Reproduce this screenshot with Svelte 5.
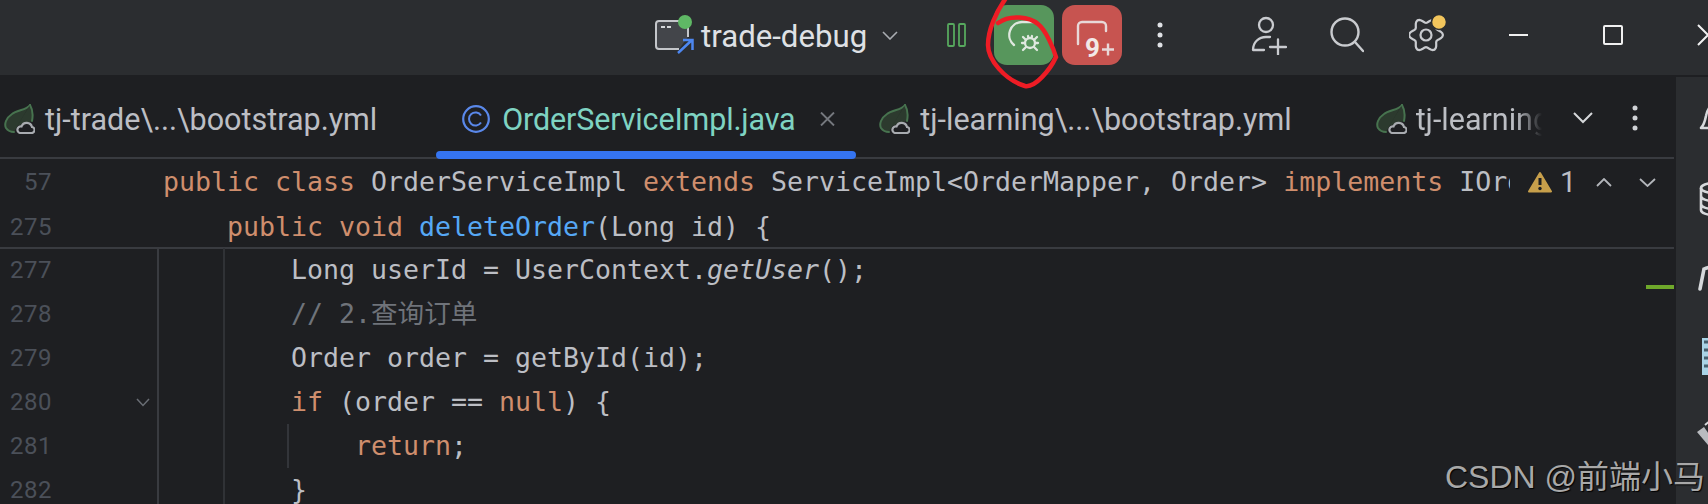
<script>
  const lines = [
    { n: '277', html: [['t','Long userId = UserContext.'],['i','getUser'],['t','();']] },
    { n: '278', html: [['c','// 2.查询订单']] },
    { n: '279', html: [['t','Order order = getById(id);']] },
    { n: '280', fold: true, html: [['k','if'],['t',' (order == '],['k','null'],['t',') {']] },
    { n: '281', guide: true, html: [['k','    return'],['t',';']] },
    { n: '282', html: [['t','}']] }
  ];

  // wavy six-lobed gear outline
  let gear = '';
  for (let a = 0; a <= 360; a += 6) {
    const t = (a - 30) * Math.PI / 180;
    const r = 14.5 + 2.4 * Math.cos(6 * t);
    gear += `${a ? 'L' : 'M'}${(17 + r * Math.cos(t)).toFixed(2)} ${(20 + r * Math.sin(t)).toFixed(2)}`;
  }
  gear += 'Z';
</script>

{#snippet leaf()}
  <svg class="leaf" width="32" height="30" viewBox="0 0 32 30" fill="none">
    <path d="M27 1C24 6 14 6 9 10 3 14 1 20 3 24c2 3 5 4 8 4" fill="#2c3a2e" stroke="#47734f" stroke-width="2" stroke-linecap="round"/>
    <path d="M27 1c3 5 3 11 2 16L14 22z" fill="#2c3a2e"/>
    <path d="M27 1c3 5 3 11 2 16" stroke="#47734f" stroke-width="2" stroke-linecap="round"/>
    <path d="M17 29h11a3 3 0 0 0 1-6 5.500 5.500 0 0 0-10.500-.5A3.300 3.300 0 0 0 17 29z" fill="#1e1f22" stroke="#a8abb0" stroke-width="2.200"/>
  </svg>
{/snippet}

<div class="page">
  <header class="titlebar">
    <div class="run-config">
      <svg width="40" height="40" viewBox="0 0 40 40" fill="none">
        <path d="M34 22V9a3 3 0 0 0-3-3H5a3 3 0 0 0-3 3v22a3 3 0 0 0 3 3h20" fill="#43454a" stroke="#c4c6ca" stroke-width="2"/>
        <path d="M7 12h4M13 12h4" stroke="#d5d7da" stroke-width="2"/>
        <circle cx="31" cy="7" r="7" fill="#5fb865"/>
        <path d="M24 38l14-13M29 25h9.500v10" stroke="#4d87f0" stroke-width="2.500"/>
      </svg>
      <span class="config-name">trade-debug</span>
      <svg class="config-chev" width="16" height="9" viewBox="0 0 16 9" fill="none"><path d="M1 1l7 7 7-7" stroke="#a9acb1" stroke-width="1.600"/></svg>
    </div>
    <svg class="pause" width="19" height="24" viewBox="0 0 19 24" fill="none">
      <rect x="1" y="1" width="6" height="22" rx="1" stroke="#57a85e" stroke-width="1.800"/>
      <rect x="12" y="1" width="6" height="22" rx="1" stroke="#57a85e" stroke-width="1.800"/>
    </svg>
    <div class="action debug">
      <svg width="60" height="60" viewBox="0 0 60 60" fill="none" stroke="#dfe8df" stroke-width="2.300" stroke-linecap="round">
        <path d="M20 40A13 13 0 0 1 28 17H40"/>
        <circle cx="36" cy="38" r="5" fill="#57965c"/>
        <path d="M29 32l3 3M43 32l-3 3M28 38h3M41 38h3M29 45l3-3M43 45l-3-3M34 31l.5 2M38 31l-.5 2"/>
      </svg>
    </div>
    <div class="action stop">
      <svg width="60" height="60" viewBox="0 0 60 60" fill="none">
        <path d="M16 39V21a4 4 0 0 1 4-4h20a4 4 0 0 1 4 4v5" stroke="#e8d8d8" stroke-width="2.400" stroke-linecap="round"/>
        <text x="23" y="52" class="nine">9</text>
        <path d="M40 44.500h12M46 38.500v12" stroke="#e8d8d8" stroke-width="2.400"/>
      </svg>
    </div>
    <svg class="kebab" width="6" height="26" viewBox="0 0 6 26"><circle cx="3" cy="3" r="2.500" fill="#dfe1e5"/><circle cx="3" cy="13" r="2.500" fill="#dfe1e5"/><circle cx="3" cy="23" r="2.500" fill="#dfe1e5"/></svg>
    <svg class="user" width="36" height="40" viewBox="0 0 36 40" fill="none" stroke="#c9cbcf" stroke-width="2.300" stroke-linecap="round">
      <circle cx="15" cy="10" r="7"/>
      <path d="M2 35c0-8 6-13 13-13h4M2 35h11M19 32h16M27 24.500v15"/>
    </svg>
    <svg class="search" width="34" height="36" viewBox="0 0 34 36" fill="none" stroke="#c9cbcf" stroke-width="2.400" stroke-linecap="round">
      <circle cx="15" cy="15" r="13.500"/><path d="M25 25l8 9"/>
    </svg>
    <svg class="gear" width="38" height="40" viewBox="0 0 38 40" fill="none">
      <path d={gear} stroke="#c9cbcf" stroke-width="2.200"/>
      <circle cx="17" cy="20" r="5.500" stroke="#c9cbcf" stroke-width="2.200"/>
      <circle cx="30" cy="7" r="7.500" fill="#f2c55c" stroke="#2b2d30" stroke-width="1.500"/>
    </svg>
    <span class="w-min"></span>
    <span class="w-max"></span>
    <svg class="w-close" width="14" height="22" viewBox="0 0 14 22" fill="none"><path d="M1 1l10 10L1 21" stroke="#f0f0f0" stroke-width="2"/></svg>
  </header>

  <div class="body">
    <main class="editor">
      <nav class="tabs">
        <div class="tab t1">{@render leaf()}<span>tj-trade\...\bootstrap.yml</span></div>
        <div class="tab active">
          <svg width="28" height="28" viewBox="0 0 28 28" fill="none">
            <circle cx="14" cy="14" r="12.800" stroke="#5a88ea" stroke-width="2.200"/>
            <path d="M19 10.500a6.500 6.500 0 1 0 0 7" stroke="#5a88ea" stroke-width="2"/>
          </svg>
          <span class="file">OrderServiceImpl.java</span>
          <svg class="close" width="15" height="14" viewBox="0 0 15 14"><path d="M1 .5l13 13M14 .5l-13 13" stroke="#75787e" stroke-width="1.900"/></svg>
        </div>
        <div class="tab t3">{@render leaf()}<span>tj-learning\...\bootstrap.yml</span></div>
        <div class="tab t4">{@render leaf()}<span class="fade">tj-learning</span></div>
        <div class="tab-tools">
          <svg width="20" height="12" viewBox="0 0 20 12" fill="none"><path d="M1 1l9 9 9-9" stroke="#d5d7da" stroke-width="2"/></svg>
          <svg width="6" height="26" viewBox="0 0 6 26"><circle cx="3" cy="3" r="2.500" fill="#cfd1d5"/><circle cx="3" cy="13" r="2.500" fill="#cfd1d5"/><circle cx="3" cy="23" r="2.500" fill="#cfd1d5"/></svg>
        </div>
      </nav>

      <section class="sticky">
        <div class="row">
          <span class="num n57">57</span>
          <code class="src clip"><b class="k">public class</b> OrderServiceImpl <b class="k">extends</b> ServiceImpl&lt;OrderMapper, Order&gt; <b class="k">implements</b> IOrd</code>
          <div class="inspect">
            <svg width="24" height="22" viewBox="0 0 24 22"><path d="M12 2L23 20.500H1z" fill="#c79f4b" stroke="#c79f4b" stroke-width="2" stroke-linejoin="round"/><path d="M12 7v7" stroke="#1e1f22" stroke-width="3"/><circle cx="12" cy="17.500" r="1.700" fill="#1e1f22"/></svg>
            <span>1</span>
            <svg width="16" height="9" viewBox="0 0 16 9" fill="none"><path d="M1 8l7-7 7 7" stroke="#b3b6bb" stroke-width="1.800"/></svg>
            <svg class="down" width="17" height="9" viewBox="0 0 17 9" fill="none"><path d="M1 1l7.500 7L16 1" stroke="#b3b6bb" stroke-width="1.800"/></svg>
          </div>
        </div>
        <div class="row">
          <span class="num">275</span>
          <code class="src"><b class="k">{'    public void'}</b> <b class="m">deleteOrder</b>(Long id) {'{'}</code>
        </div>
      </section>

      <section class="code">
        <div class="rule"></div>
        {#each lines as l}
          <div class="row">
            <span class="num">{l.n}</span>
            <span class="foldcol">
              {#if l.fold}
                <svg width="14" height="9" viewBox="0 0 14 9" fill="none"><path d="M1 1l6 6.500L13 1" stroke="#6a6e75" stroke-width="1.500"/></svg>
              {/if}
            </span>
            <span class="indent"></span>
            <code class="src inner">{#if l.guide}<i class="guide"></i>{/if}{#each l.html as [c, t]}<span class={c}>{t}</span>{/each}</code>
          </div>
        {/each}
        <div class="mark"></div>
      </section>
    </main>

    <aside class="side">
      <svg class="s-bell" width="28" height="28" viewBox="0 0 28 28" fill="none" stroke="#d6d8db" stroke-width="2.600" stroke-linecap="round" stroke-linejoin="round"><path d="M2 25c3-3 4-7 5-12 1-6 4-10 7-10s6 4 7 10c1 5 2 9 5 12z"/></svg>
      <svg class="s-db" width="30" height="34" viewBox="0 0 30 34" fill="none" stroke="#d6d8db" stroke-width="2.600"><ellipse cx="15" cy="6" rx="13" ry="5"/><path d="M2 6v22c0 3 6 5 13 5s13-2 13-5V6M2 14c0 3 6 5 13 5s13-2 13-5M2 22c0 3 6 5 13 5s13-2 13-5"/></svg>
      <svg class="s-r" width="30" height="26" viewBox="0 0 30 26" fill="none" stroke="#d6d8db" stroke-width="3.600" stroke-linecap="round"><path d="M2 24L6 4c6-3 14-2 22 1"/></svg>
      <svg class="s-doc" width="30" height="37" viewBox="0 0 30 37"><rect x="0" y="0" width="28" height="37" fill="#a9d3e6"/><path d="M2 4h5M2 12h5M2 20h5M2 28h5" stroke="#47606e" stroke-width="3"/></svg>
      <svg class="s-tool" width="30" height="32" viewBox="0 0 30 32" fill="none"><path d="M1 12l7-5 14 20-5 4z" fill="#b9bbbf"/><path d="M9 5l6-5 12 8" stroke="#d6d8db" stroke-width="2"/></svg>
    </aside>
  </div>

  <svg class="scribble" width="90" height="92" viewBox="0 0 90 92" fill="none">
    <path d="M26 -2C16 12 8 30 8 45c0 15 17 35 37 41 10 2 25-16 31-29-2-7-10-27-18-33-8-7-28-10-40-1" stroke="#ee1c25" stroke-width="4.500" stroke-linecap="round"/>
  </svg>
  <div class="watermark">CSDN @前端小马</div>
</div>

<style>
  :global(body) { margin: 0; background: #1e1f22; }
  .page { position: relative; width: 1708px; height: 504px; overflow: hidden; background: #1e1f22; font-family: "Roboto", "Noto Sans CJK SC", sans-serif; }

  .titlebar { height: 75px; background: #2b2d30; display: flex; align-items: center; box-sizing: border-box; padding: 0 0 5px 654px; overflow: hidden; }
  .titlebar > * { flex: none; }
  .run-config { display: flex; align-items: center; width: 293px; }
  .config-name { font-size: 31.200px; color: #dfe1e5; margin: 2px 0 0 7px; }
  .config-chev { margin-left: 15px; }
  .pause { margin-right: 28px; }
  .action { width: 60px; height: 60px; border-radius: 13px; }
  .action svg { display: block; }
  .debug { background: #57965c; }
  .stop { background: #c75450; margin-left: 8px; }
  .nine { font: 700 26px "Roboto", sans-serif; fill: #f2e8e8; }
  .kebab { margin-left: 35px; }
  .user { margin-left: 88px; }
  .search { margin-left: 43px; }
  .gear { margin-left: 45px; }
  .w-min { width: 19px; height: 2px; background: #f0f0f0; margin-left: 62px; }
  .w-max { width: 20px; height: 20px; box-sizing: border-box; border: 2px solid #f0f0f0; border-radius: 2px; margin-left: 75px; }
  .w-close { margin-left: 74px; }

  .body { display: flex; height: 429px; }
  .editor { width: 1676px; flex: none; position: relative; }
  .side { flex: 1; background: #2b2d30; margin-top: 2px; display: flex; flex-direction: column; padding: 26px 0 0 23px; overflow: hidden; }
  .side svg { flex: none; }
  .s-db { margin-top: 51px; }
  .s-r { margin-top: 49px; margin-left: -1px; }
  .s-doc { margin-top: 47px; margin-left: 3px; }
  .s-tool { margin-top: 45px; margin-left: -3px; }

  .tabs { position: relative; display: flex; align-items: center; height: 84px; box-sizing: border-box; border-bottom: 2px solid #393b40; margin-right: 2px; padding-top: 6px; font-size: 30.500px; color: #bcbec4; }
  .tab { display: flex; align-items: center; gap: 10px; flex: none; }
  .t1 { margin-left: 3px; }
  .active { position: relative; align-self: stretch; width: 420px; box-sizing: border-box; margin-left: 59px; padding-left: 26px; }
  .active::after { content: ""; position: absolute; left: 0; right: 0; bottom: -2px; height: 8px; border-radius: 4px; background: #3574f0; }
  .active .file { color: #7fd3c2; margin-left: 2px; letter-spacing: -.15px; }
  .active .close { margin-left: 14px; }
  .t3 { margin-left: 22px; }
  .t4 { margin-left: 83px; gap: 9px; }
  .fade { width: 126px; overflow: hidden; white-space: nowrap; -webkit-mask-image: linear-gradient(to right, #000 80%, transparent); mask-image: linear-gradient(to right, #000 80%, transparent); }
  .tab-tools { position: absolute; right: 36px; top: 30px; display: flex; align-items: center; gap: 39px; }

  .row { display: flex; align-items: center; height: 44px; }
  .num { width: 52px; text-align: right; flex: none; font: 24px "Roboto", sans-serif; color: #4b5059; letter-spacing: .5px; }
  .src { font: 26.580px / 44px "DejaVu Sans Mono", "Noto Sans CJK SC", monospace; color: #bcbec4; white-space: pre; }
  .src b { font-weight: 400; }
  .src .k { color: #cf8e6d; }
  .src .m { color: #56a8f5; }
  .src .i { font-style: italic; }
  .src .c { color: #6f737a; }

  .sticky { margin-right: 2px; height: 88px; }
  .sticky .row:first-child { height: 46px; }
  .sticky .src { margin-left: 111px; }
  .clip { width: 1347px; overflow: hidden; flex: none; }
  .inspect { display: flex; align-items: center; color: #bcbec4; font-size: 29px; margin-left: 18px; }
  .inspect span { width: 44px; box-sizing: border-box; padding-left: 8px; }
  .inspect .down { margin-left: 27px; }

  .code { position: relative; }
  .rule { height: 2px; background: #393b40; margin: 0 2px -1px 0; }
  .foldcol { width: 107px; flex: none; box-sizing: border-box; display: flex; justify-content: flex-end; align-items: center; padding-right: 7px; border-right: 2px solid #393b40; align-self: stretch; }
  .indent { width: 66px; flex: none; box-sizing: border-box; border-right: 2px solid #303236; align-self: stretch; }
  .inner { margin-left: 66px; position: relative; }
  .guide { position: absolute; left: -4px; top: 0; bottom: 0; width: 2px; background: #33353a; }
  .mark { position: absolute; right: 2px; top: 38px; width: 28px; height: 4px; background: #6fa82b; }

  .scribble { position: absolute; left: 980px; top: 0; pointer-events: none; }
  .watermark { position: absolute; left: 1445px; top: 451px; font: 32px "Liberation Sans", "Noto Sans CJK SC", sans-serif; color: #a8a8a8; text-shadow: 1px 1px 1px #000; white-space: nowrap; }
</style>
